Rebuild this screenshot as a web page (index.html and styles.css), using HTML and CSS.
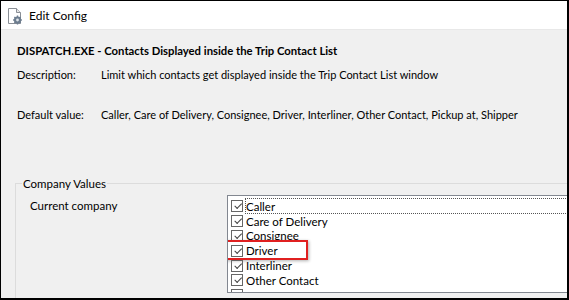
FILE: index.html
```
<!DOCTYPE html>
<html lang="en">
  <head>
    <meta charset="UTF-8" />
    <title>Edit Config</title>
    <link rel="stylesheet" href="styles.css">
  </head>
  <body>
    <div class="window">
      <!-- Title bar -->
      <div class="titlebar">
        <svg class="app-icon" width="16" height="18" viewBox="0 0 16 18">
          <path d="M1.5 1.5h8l4 4v11h-12z" fill="#fff" stroke="#8a8f96" />
          <path d="M9.5 1.5v4h4" fill="#e6e6e6" stroke="#8a8f96" />
          <circle cx="10.5" cy="13" r="3.6" fill="#6d7d8f" />
          <circle cx="10.5" cy="13" r="1.4" fill="#dfe5ea" />
          <path d="M10.5 8.6v2M10.5 15.4v2M6.1 13h2M12.9 13h2M7.4 9.9l1.4 1.4M12.2 14.7l1.4 1.4M7.4 16.1l1.4-1.4M12.2 11.3l1.4-1.4" stroke="#6d7d8f" stroke-width="1.4" />
        </svg>
        <span>Edit Config</span>
      </div>

      <div class="content">
        <h1>DISPATCH.EXE - Contacts Displayed inside the Trip Contact List</h1>
        <div class="row">
          <span class="label">Description:</span>
          <span>Limit which contacts get displayed inside the Trip Contact List window</span>
        </div>
        <div class="row default">
          <span class="label">Default value:</span>
          <span>Caller, Care of Delivery, Consignee, Driver, Interliner, Other Contact, Pickup at, Shipper</span>
        </div>

        <fieldset class="group">
          <legend>Company Values</legend>
          <div class="company">
            <span class="company-label">Current company</span>
            <div class="listbox">
              <div class="item focus"><span class="check"></span>Caller</div>
              <div class="item"><span class="check"></span>Care of Delivery</div>
              <div class="item"><span class="check"></span>Consignee</div>
              <div class="item highlight"><span class="check"></span>Driver</div>
              <div class="item"><span class="check"></span>Interliner</div>
              <div class="item"><span class="check"></span>Other Contact</div>
              <div class="item"><span class="check"></span></div>
            </div>
          </div>
        </fieldset>
      </div>
    </div>
  </body>
</html>
```
FILE: styles.css
```
body {
  margin: 0;
  font-family: Lato, "Noto Sans", sans-serif;
  font-size: 11px;
  color: #000;
}

.window {
  width: 569px;
  height: 300px;
  box-sizing: border-box;
  border: 1px solid #000;
  border-right-width: 2px;
  border-bottom-width: 2px;
  overflow: hidden;
  background: #f0f0f0;
}

/* Title bar */
.titlebar {
  height: 28px;
  background: #fff;
  border-bottom: 1px solid #e8e8e8;
  display: flex;
  align-items: center;
  gap: 6px;
  padding-left: 6px;
  font-size: 12px;
}
.app-icon {
  margin-top: 1px;
}

/* Content */
.content {
  padding: 13px 0 0 16px;
}
h1 {
  margin: 0;
  font-size: 11.3px;
  font-weight: bold;
  line-height: 16px;
}
.row {
  display: flex;
  margin-top: 8px;
  line-height: 16px;
}
.row.default {
  margin-top: 24px;
}
.label {
  width: 84px;
  flex-shrink: 0;
}

/* Group box */
.group {
  margin: 54px 0 0 -2px;
  padding: 0 0 0 14px;
  width: 700px;
  height: 200px;
  border: 1px solid #dcdcdc;
}
.group legend {
  padding: 0 1px;
  margin-left: -8px;
  font-size: 11.5px;
}
.company {
  display: flex;
  align-items: flex-start;
  padding-top: 5px;
}
.company-label {
  width: 197px;
  padding-top: 4px;
  font-size: 11.5px;
}
.listbox {
  width: 400px;
  height: 93px;
  background: #fff;
  border: 1px solid #828790;
  overflow: hidden;
  padding-top: 3px;
  box-sizing: content-box;
  font-size: 11.5px;
}
.item {
  display: flex;
  align-items: center;
  height: 14.8px;
  padding-left: 3px;
  gap: 3px;
  position: relative;
}
.item.focus::after {
  content: "";
  position: absolute;
  left: 17px;
  right: 0;
  top: -1px;
  bottom: 0;
  border: 1px dotted #555;
}
.check {
  width: 12px;
  height: 12px;
  border: 1px solid #666;
  box-sizing: border-box;
  position: relative;
}
.check::after {
  content: "";
  position: absolute;
  left: 2px;
  top: 0;
  width: 6px;
  height: 3px;
  border-left: 1.3px solid #444;
  border-bottom: 1.3px solid #444;
  transform: rotate(-45deg) translate(-1px, 2px);
}
.item.highlight::before {
  content: "";
  position: absolute;
  left: -12px;
  top: -3px;
  width: 88px;
  height: 16px;
  border: 2px solid #e02020;
  box-shadow: 1px 1px 3px rgba(0, 0, 0, 0.3);
}
```
